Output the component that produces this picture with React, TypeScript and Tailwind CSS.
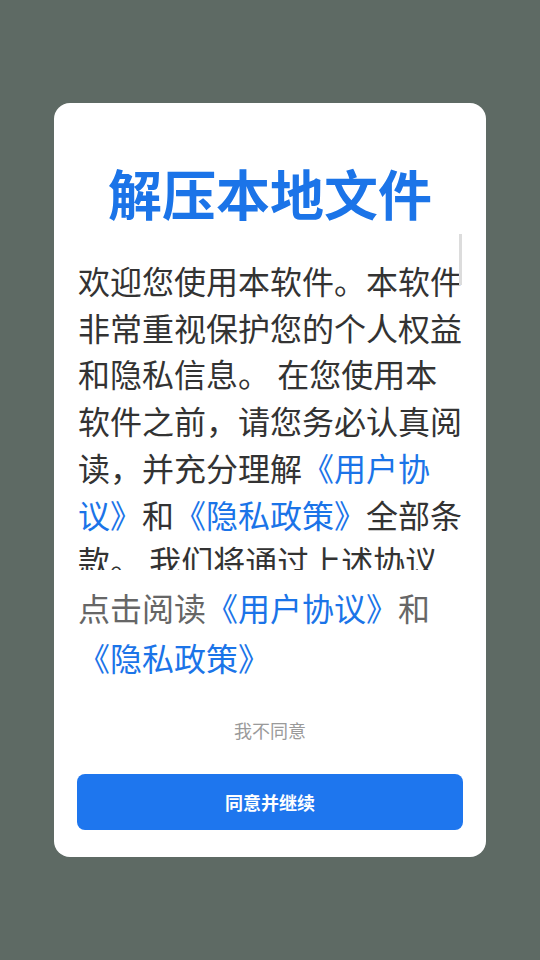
import React from "react";

export default function App() {
  const blue = "text-[#1b74e8]";
  return (
    <div
      className="flex h-[960px] w-full items-center justify-center bg-[#5e6a64]"
      style={{ fontFamily: '"Noto Sans CJK SC", "Noto Sans", sans-serif' }}
    >
      <div className="flex w-[432px] flex-col rounded-[16px] bg-white pt-[58px] pb-[27px]">
        <h1 className="text-center text-[54px] font-bold leading-[64px] text-[#1b74e8]">
          解压本地文件
        </h1>

        <div className="relative ml-[24px] mr-[20px] mt-[9px] h-[336px] overflow-hidden">
          <p className="pt-[23px] text-[32px] leading-[46.7px] text-[#333333]">
            欢迎您使用本软件。本软件非常重视保护您的个人权益和隐私信息。 在您使用本软件之前，请您务必认真阅读，并充分理解
            <span className={blue}>《用户协议》</span>和
            <span className={blue}>《隐私政策》</span>
            全部条款。 我们将通过上述协议向您说明我们如何收集、使用、存储和共享您的个人信息，以及您享有的查询、更正、删除等相关权利。如您同意上述协议的全部内容，请点击“同意并继续”开始使用我们的服务。
          </p>
          <div className="absolute right-[4px] top-0 h-[51px] w-[3px] bg-[#dcdcdc]" />
        </div>

        <p className="mx-[24px] mt-[12px] text-[32px] leading-[50px] text-[#666666]">
          点击阅读<span className={blue}>《用户协议》</span>和
          <span className={blue}>《隐私政策》</span>
        </p>

        <div className="mt-[36px] text-center text-[18px] leading-[24px] text-[#9a9a9a]">
          我不同意
        </div>

        <button className="mx-[23px] mt-[32px] h-[56px] rounded-[8px] bg-[#1e76ee] text-[18px] font-bold text-white">
          同意并继续
        </button>
      </div>
    </div>
  );
}
